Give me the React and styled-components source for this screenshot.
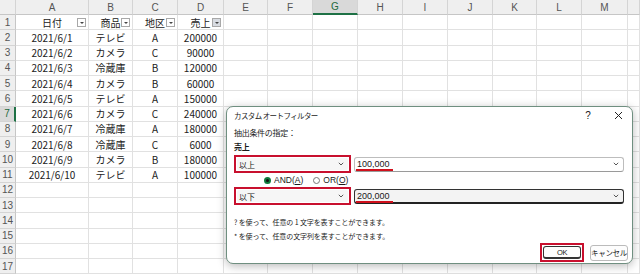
import React from "react";
import styled, { createGlobalStyle } from "styled-components";

const Global = createGlobalStyle`
  html, body { margin: 0; padding: 0; background: #fff; }
  body { width: 640px; height: 274px; overflow: hidden; font-family: "Noto Sans CJK JP", "Noto Sans", sans-serif; }
`;

const colWidths = [16, 73, 44, 45, 46, 44, 45, 45, 45, 45, 45, 44, 45, 46, 12];
const letters = ["", "A", "B", "C", "D", "E", "F", "G", "H", "I", "J", "K", "L", "M", ""];

const data = [
  ["2021/6/1", "テレビ", "A", "200000"],
  ["2021/6/2", "カメラ", "C", "90000"],
  ["2021/6/3", "冷蔵庫", "B", "120000"],
  ["2021/6/4", "カメラ", "B", "60000"],
  ["2021/6/5", "テレビ", "A", "150000"],
  ["2021/6/6", "カメラ", "C", "240000"],
  ["2021/6/7", "冷蔵庫", "A", "180000"],
  ["2021/6/8", "冷蔵庫", "C", "6000"],
  ["2021/6/9", "カメラ", "B", "180000"],
  ["2021/6/10", "テレビ", "A", "100000"],
];
const heads = ["日付", "商品", "地区", "売上"];

const Stage = styled.div`
  position: relative;
  width: 640px;
  height: 274px;
  overflow: hidden;
`;

const Sheet = styled.div`
  display: grid;
  grid-template-columns: ${colWidths.map((w) => w + "px").join(" ")};
  grid-template-rows: 15px repeat(17, 15.25px);
`;

const ColHead = styled.div`
  background: ${(p) => (p.$sel ? "#d9d9d9" : "#efefef")};
  border-right: 1px solid #d4d4d4;
  border-bottom: ${(p) => (p.$sel ? "2px solid #1e7145" : "1px solid #c6c6c6")};
  color: ${(p) => (p.$sel ? "#1e6a40" : "#555")};
  font-family: "Liberation Sans", "Noto Sans", sans-serif;
  font-size: 10px;
  display: flex;
  align-items: center;
  justify-content: center;
  box-sizing: border-box;
`;

const RowHead = styled.div`
  background: ${(p) => (p.$sel ? "#d9d9d9" : "#efefef")};
  border-right: ${(p) => (p.$sel ? "2px solid #1e7145" : "1px solid #c6c6c6")};
  border-bottom: 1px solid #d4d4d4;
  color: ${(p) => (p.$sel ? "#1e6a40" : "#555")};
  font-family: "Liberation Sans", "Noto Sans", sans-serif;
  font-size: 10px;
  display: flex;
  align-items: center;
  justify-content: center;
  box-sizing: border-box;
`;

const Cell = styled.div`
  position: relative;
  background: #fff;
  border-right: 1px solid #e1e1e1;
  border-bottom: 1px solid #e1e1e1;
  box-sizing: border-box;
  font-size: 10px;
  color: #222;
  display: flex;
  align-items: center;
  justify-content: center;
  white-space: nowrap;
`;

const FilterBtn = styled.span`
  position: absolute;
  right: 2px;
  top: 3px;
  width: 9px;
  height: 9px;
  box-sizing: border-box;
  border: 1px solid #a8a8a8;
  background: ${(p) => (p.$on ? "#d8dce2" : "#fff")};
  display: flex;
  align-items: center;
  justify-content: center;
  &::after {
    content: "";
    border-left: 2px solid transparent;
    border-right: 2px solid transparent;
    border-top: 2px solid #444;
  }
`;

const Dialog = styled.div`
  position: absolute;
  left: 226px;
  top: 106px;
  width: 407px;
  height: 158px;
  box-sizing: border-box;
  background: #fff;
  border: 1px solid #6f8f80;
  border-radius: 7px;
  box-shadow: 0 2px 10px rgba(0, 0, 0, 0.28);
  padding: 2px 4px 0 7px;
  display: flex;
  flex-direction: column;
  font-size: 8px;
  color: #1a1a1a;
`;

const TitleBar = styled.div`
  display: flex;
  align-items: center;
  height: 13px;
`;

const Title = styled.span`
  flex: 1;
  font-size: 7.5px;
  letter-spacing: -0.6px;
`;

const TitleBtn = styled.span`
  width: 20px;
  display: flex;
  justify-content: center;
  align-items: center;
  font-family: "Liberation Sans", sans-serif;
  font-size: 10px;
  margin-left: ${(p) => p.$gap || 0}px;
`;

const Label = styled.div`
  margin-top: ${(p) => p.$mt || 0}px;
  font-weight: ${(p) => (p.$bold ? 700 : 400)};
  font-size: 8px;
  line-height: 14px;
  letter-spacing: -0.3px;
`;

const CondRow = styled.div`
  display: flex;
  align-items: center;
  gap: 3px;
  padding-right: 4px;
  margin-top: ${(p) => p.$mt || 0}px;
`;

const SelectBox = styled.div`
  width: 117px;
  height: 18px;
  box-sizing: border-box;
  border: 2px solid #c8102e;
  padding: 1px;
  flex-shrink: 0;
`;

const SelectInner = styled.div`
  height: 100%;
  box-sizing: border-box;
  background: #f6f6f6;
  border-radius: 2px;
  display: flex;
  align-items: center;
  justify-content: space-between;
  padding: 0 4px 0 2px;
  font-size: 8px;
`;

const InputBox = styled.div`
  flex: 1;
  height: 15px;
  box-sizing: border-box;
  border: 1px solid ${(p) => (p.$focus ? "#333" : "#bdbdbd")};
  border-bottom: ${(p) => (p.$focus ? "2px solid #222" : "1px solid #9a9a9a")};
  border-radius: 3px;
  background: ${(p) => (p.$focus ? "#f3f3f3" : "#fff")};
  display: flex;
  align-items: center;
  justify-content: space-between;
  padding: 0 4px 0 2px;
`;

const Value = styled.span`
  font-family: "Liberation Sans", sans-serif;
  font-size: 9px;
  position: relative;
  &::after {
    content: "";
    position: absolute;
    left: -1px;
    right: -3px;
    bottom: -2px;
    height: 2px;
    background: #d0101c;
  }
`;

const RadioRow = styled.div`
  display: flex;
  align-items: center;
  height: 14px;
  padding-left: 30px;
  gap: 10px;
  font-family: "Liberation Sans", "Noto Sans", sans-serif;
  font-size: 8.5px;
`;

const RadioItem = styled.label`
  display: flex;
  align-items: center;
  gap: 3px;
`;

const RadioDot = styled.span`
  width: 7px;
  height: 7px;
  border-radius: 50%;
  box-sizing: border-box;
  border: ${(p) => (p.$on ? "2.5px solid #0f7a3c" : "1px solid #777")};
  background: ${(p) => (p.$on ? "#111" : "#fff")};
`;

const U = styled.span`
  text-decoration: underline;
`;

const Help = styled.div`
  font-size: 7px;
  line-height: 14px;
  margin-top: ${(p) => p.$mt || 0}px;
  letter-spacing: -0.1px;
  white-space: nowrap;
`;

const Footer = styled.div`
  display: flex;
  justify-content: flex-end;
  align-items: center;
  gap: 6px;
`;

const OkFrame = styled.div`
  border: 2px solid #c8102e;
  padding: 1px;
  width: 44px;
  height: 19px;
  box-sizing: border-box;
`;

const Btn = styled.div`
  height: ${(p) => p.$h || 13}px;
  width: ${(p) => (p.$w ? p.$w + "px" : "100%")};
  box-sizing: border-box;
  border: 1px solid ${(p) => (p.$primary ? "#333" : "#bbb")};
  border-bottom-width: ${(p) => (p.$primary ? 2 : 1)}px;
  border-radius: 3px;
  background: #fdfdfd;
  font-family: "Liberation Sans", "Noto Sans CJK JP", sans-serif;
  font-size: 7.5px;
  letter-spacing: -0.3px;
  white-space: nowrap;
  display: flex;
  align-items: center;
  justify-content: center;
`;

const Chevron = () => (
  <svg width="6" height="4" viewBox="0 0 6 4">
    <path d="M0.8 0.8 L3 3 L5.2 0.8" fill="none" stroke="#444" strokeWidth="0.9" />
  </svg>
);

const CloseIcon = () => (
  <svg width="9" height="9" viewBox="0 0 9 9">
    <path d="M1 1 L8 8 M8 1 L1 8" stroke="#222" strokeWidth="1" />
  </svg>
);

export default function App() {
  const cells = [];
  letters.forEach((l, i) =>
    cells.push(<ColHead key={"h" + i} $sel={l === "G"}>{l}</ColHead>)
  );
  for (let r = 1; r <= 17; r++) {
    cells.push(<RowHead key={"r" + r} $sel={r === 7}>{r}</RowHead>);
    for (let c = 1; c < colWidths.length; c++) {
      let content = null;
      if (r === 1 && c <= 4) {
        content = (
          <>
            {heads[c - 1]}
            <FilterBtn $on={c === 4} />
          </>
        );
      } else if (r >= 2 && r <= 11 && c <= 4) {
        content = data[r - 2][c - 1];
      }
      cells.push(<Cell key={r + "-" + c}>{content}</Cell>);
    }
  }

  return (
    <Stage>
      <Global />
      <Sheet>{cells}</Sheet>
      <Dialog>
        <TitleBar>
          <Title>カスタム オートフィルター</Title>
          <TitleBtn>?</TitleBtn>
          <TitleBtn $gap={10}>
            <CloseIcon />
          </TitleBtn>
        </TitleBar>
        <Label $mt={4}>抽出条件の指定：</Label>
        <Label $bold>売上</Label>
        <CondRow $mt={1}>
          <SelectBox>
            <SelectInner>
              以上
              <Chevron />
            </SelectInner>
          </SelectBox>
          <InputBox>
            <Value>100,000</Value>
            <Chevron />
          </InputBox>
        </CondRow>
        <RadioRow>
          <RadioItem>
            <RadioDot $on />
            <span>
              AND(<U>A</U>)
            </span>
          </RadioItem>
          <RadioItem>
            <RadioDot />
            <span>
              OR(<U>O</U>)
            </span>
          </RadioItem>
        </RadioRow>
        <CondRow>
          <SelectBox>
            <SelectInner>
              以下
              <Chevron />
            </SelectInner>
          </SelectBox>
          <InputBox $focus>
            <Value>200,000</Value>
            <Chevron />
          </InputBox>
        </CondRow>
        <Help $mt={10}>? を使って、任意の 1 文字を表すことができます。</Help>
        <Help>* を使って、任意の文字列を表すことができます。</Help>
        <Footer>
          <OkFrame>
            <Btn $primary>OK</Btn>
          </OkFrame>
          <Btn $w={38} $h={16}>キャンセル</Btn>
        </Footer>
      </Dialog>
    </Stage>
  );
}
